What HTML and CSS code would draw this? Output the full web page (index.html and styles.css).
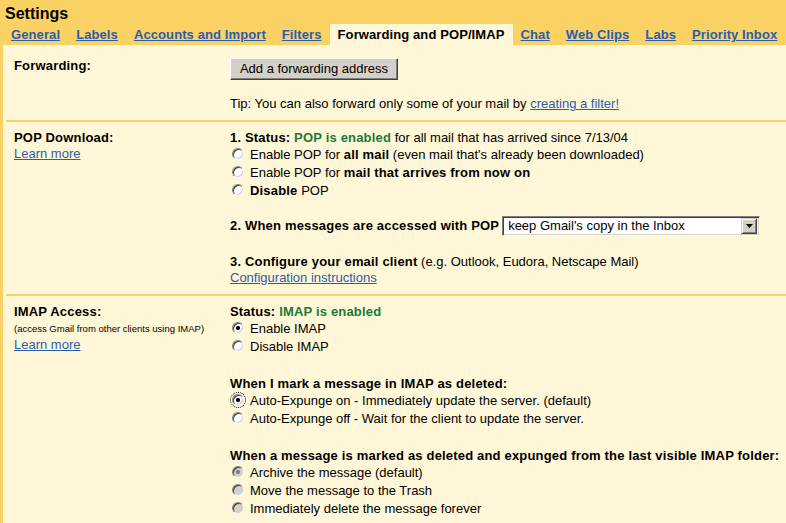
FILE: index.html
```html
<!DOCTYPE html>
<html>
<head>
<meta charset="utf-8">
<title>Settings</title>
<link rel="stylesheet" href="styles.css">
</head>
<body>
<div class="page">
  <div class="title">Settings</div>
  <div class="tabs">
    <a class="tab" href="#">General</a>
    <a class="tab" href="#">Labels</a>
    <a class="tab" href="#">Accounts and Import</a>
    <a class="tab" href="#">Filters</a>
    <span class="tab active">Forwarding and POP/IMAP</span>
    <a class="tab" href="#">Chat</a>
    <a class="tab" href="#">Web Clips</a>
    <a class="tab" href="#">Labs</a>
    <a class="tab" href="#">Priority Inbox</a>
  </div>
  <div class="panel">
    <div class="section">
      <div class="label"><b>Forwarding:</b></div>
      <div class="content">
        <div class="btn">Add a forwarding address</div>
        <div class="line gap16">Tip: You can also forward only some of your mail by <a href="#">creating a filter!</a></div>
      </div>
    </div>

    <div class="section sep">
      <div class="label">
        <div class="line"><b>POP Download:</b></div>
        <div class="line"><a href="#">Learn more</a></div>
      </div>
      <div class="content">
        <div class="line"><b>1. Status: <span class="green">POP is enabled</span></b> for all mail that has arrived since 7/13/04</div>
        <label class="opt"><input type="radio" name="pop"><span>Enable POP for <b>all mail</b> (even mail that's already been downloaded)</span></label>
        <label class="opt"><input type="radio" name="pop"><span>Enable POP for <b>mail that arrives from now on</b></span></label>
        <label class="opt"><input type="radio" name="pop"><span><b>Disable</b> POP</span></label>
        <div class="selrow gap16">
          <b>2. When messages are accessed with POP</b>
          <div class="select"><span class="seltext">keep Gmail's copy in the Inbox</span><span class="arrow"><svg width="7" height="4" viewBox="0 0 7 4"><path d="M0 0h7L3.5 4z" fill="#000"/></svg></span></div>
        </div>
        <div class="line gap18"><b>3. Configure your email client</b> (e.g. Outlook, Eudora, Netscape Mail)</div>
        <div class="line"><a href="#">Configuration instructions</a></div>
      </div>
    </div>

    <div class="section sep">
      <div class="label">
        <div class="line"><b>IMAP Access:</b></div>
        <div class="small">(access Gmail from other clients using IMAP)</div>
        <div class="line"><a href="#">Learn more</a></div>
      </div>
      <div class="content">
        <div class="line"><b>Status: <span class="green">IMAP is enabled</span></b></div>
        <label class="opt"><input type="radio" name="imap" checked><span>Enable IMAP</span></label>
        <label class="opt"><input type="radio" name="imap"><span>Disable IMAP</span></label>
        <div class="line gap20 nowrap"><b>When I mark a message in IMAP as deleted:</b></div>
        <label class="opt"><input type="radio" name="exp" class="focus" checked><span>Auto-Expunge on - Immediately update the server. (default)</span></label>
        <label class="opt"><input type="radio" name="exp"><span>Auto-Expunge off - Wait for the client to update the server.</span></label>
        <div class="line gap20 nowrap"><b>When a message is marked as deleted and expunged from the last visible IMAP folder:</b></div>
        <label class="opt"><input type="radio" name="del" checked disabled><span>Archive the message (default)</span></label>
        <label class="opt"><input type="radio" name="del" disabled><span>Move the message to the Trash</span></label>
        <label class="opt"><input type="radio" name="del" disabled><span>Immediately delete the message forever</span></label>
      </div>
    </div>
  </div>
</div>
</body>
</html>
```
FILE: styles.css
```css
html, body {
  margin: 0;
  padding: 0;
  height: 100%;
}
body {
  background: #fad163;
  font-family: "Liberation Sans", Arial, sans-serif;
  font-size: 13px;
  color: #000;
  overflow: hidden;
}
.page {
  display: flex;
  flex-direction: column;
  min-height: 100%;
}
a {
  color: #2a5db0;
  text-decoration: underline;
}
b {
  letter-spacing: 0.18px;
}
.title {
  font-size: 16px;
  font-weight: bold;
  line-height: 21px;
  padding: 3px 0 0 5px;
}
.tabs {
  display: flex;
  padding-left: 3px;
  height: 21px;
}
.tab {
  font-weight: bold;
  letter-spacing: 0.1px;
  line-height: 20px;
  padding: 1px 8px 0;
  white-space: nowrap;
}
.tab.active {
  background: #fff7d7;
  color: #000;
}
.panel {
  flex: 1;
  background: #fff7d7;
  margin-left: 3px;
  padding: 5px 0 0 3px;
}
.section {
  display: grid;
  grid-template-columns: 216px 1fr;
  padding: 8px 0;
}
.section.sep {
  border-top: 2px solid #fad163;
}
.label {
  padding-left: 8px;
  line-height: 16px;
}
.content {
  padding-left: 8px;
  line-height: 16px;
}
.line {
  line-height: 16px;
  white-space: nowrap;
}
.small {
  font-size: 9.5px;
  line-height: 17px;
  white-space: nowrap;
}
.green {
  color: #1a7a3a;
}
.gap16 { margin-top: 16px; }
.gap18 { margin-top: 18px; }
.gap20 { margin-top: 20px; }
.nowrap { white-space: nowrap; }
.btn {
  box-sizing: border-box;
  width: 168px;
  height: 22px;
  line-height: 20px;
  text-align: center;
  background: #d4d0c8;
  border: 1px solid;
  border-color: #fff #404040 #404040 #fff;
  box-shadow: inset -1px -1px 0 #808080;
  font-size: 13px;
}
.opt {
  display: flex;
  align-items: center;
  height: 18px;
  white-space: nowrap;
}
.opt input {
  -webkit-appearance: none;
  appearance: none;
  box-sizing: border-box;
  width: 12px;
  height: 12px;
  margin: -2px 6px 0 2px;
  border-radius: 50%;
  border: 1px solid;
  border-color: #808080 #f4f4f4 #f4f4f4 #808080;
  box-shadow: inset 1px 1px 0 #404040, inset -1px -1px 0 #d4d0c8;
  background: #fff;
  flex: none;
}
.opt input:checked {
  background: radial-gradient(circle at 50% 50%, #000 0 1.8px, #fff 2.4px);
}
.opt input:disabled {
  background: #d4d0c8;
}
.opt input:disabled:checked {
  background: radial-gradient(circle at 50% 50%, #808080 0 1.8px, #d4d0c8 2.4px);
}
.opt input.focus {
  outline: 1px dotted #000;
  outline-offset: 1px;
}
.selrow {
  display: flex;
  align-items: center;
  gap: 3px;
  height: 20px;
  white-space: nowrap;
}
.select {
  box-sizing: border-box;
  width: 258px;
  height: 20px;
  display: flex;
  align-items: center;
  background: #fff;
  border: 1px solid;
  border-color: #808080 #fff #fff #808080;
  box-shadow: inset 1px 1px 0 #404040, inset -1px -1px 0 #d4d0c8;
  padding: 2px;
}
.seltext {
  flex: 1;
  padding-left: 3px;
  line-height: 16px;
}
.arrow {
  box-sizing: border-box;
  width: 16px;
  height: 16px;
  display: flex;
  align-items: center;
  justify-content: center;
  background: #d4d0c8;
  border: 1px solid;
  border-color: #d4d0c8 #404040 #404040 #d4d0c8;
  box-shadow: inset 1px 1px 0 #fff, inset -1px -1px 0 #808080;
}
```
